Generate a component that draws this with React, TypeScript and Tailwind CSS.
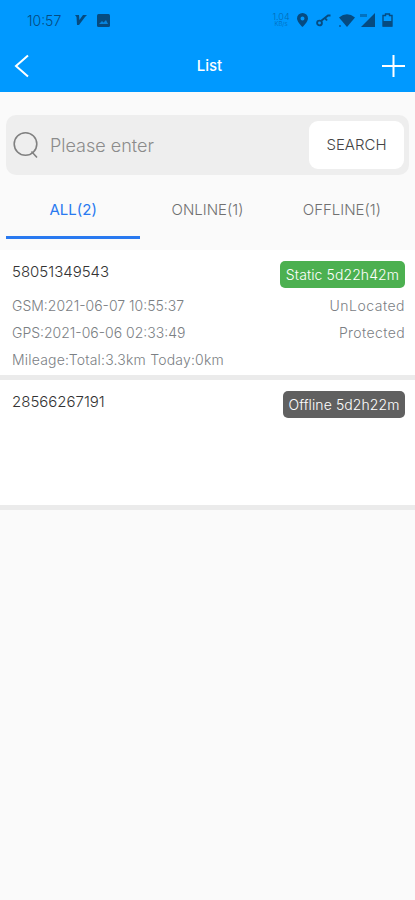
import type { ReactNode } from "react";

interface Device {
  id: string;
  status: ReactNode;
  lines: { text: string; className: string; side?: string; sideClassName?: string }[];
}

const devices: Device[] = [
  {
    id: "58051349543",
    status: (
      <span className="flex h-[27px] w-[125px] items-center justify-center rounded-[5px] bg-[#4cb050] text-[14px] tracking-[0.1px] text-white">
        Static 5d22h42m
      </span>
    ),
    lines: [
      {
        text: "GSM:2021-06-07 10:55:37",
        className: "tracking-[0px]",
        side: "UnLocated",
        sideClassName: "tracking-[0.5px]",
      },
      {
        text: "GPS:2021-06-06 02:33:49",
        className: "tracking-[0px]",
        side: "Protected",
        sideClassName: "tracking-[0.4px]",
      },
      { text: "Mileage:Total:3.3km Today:0km", className: "tracking-[0.2px]" },
    ],
  },
  {
    id: "28566267191",
    status: (
      <span className="flex h-[27px] w-[122px] items-center justify-center rounded-[5px] bg-[#606060] text-[14px] tracking-[0.1px] text-white">
        Offline 5d2h22m
      </span>
    ),
    lines: [],
  },
];

function StatusBar() {
  return (
    <div className="flex h-10 items-center justify-between pr-[22px] pl-[27px] text-[#064b80]">
      <div className="flex items-center">
        <span className="w-[48px] text-[14px] tracking-[0px]">10:57</span>
        <svg width="12" height="12" viewBox="0 0 12 12" fill="currentColor">
          <path d="M0 1h4l.4 5L8 1h4l-2 2L4 11H2L1.500 3z" />
        </svg>
        <svg className="ml-[10px]" width="13" height="13" viewBox="0 0 13 13">
          <rect width="13" height="13" rx="1.500" fill="currentColor" />
          <path d="M2 10l3-3 1.500 1.500L9 6l2 4z" fill="#0784dd" />
        </svg>
      </div>
      <div className="flex items-center">
        <div className="mr-[8px] flex w-[16px] flex-col items-center leading-none opacity-60">
          <span className="text-[9px] leading-[8px]">1.04</span>
          <span className="text-[6px] leading-[6px]">KB/s</span>
        </div>
        <svg width="11" height="14" viewBox="0 0 11 14" fill="currentColor">
          <path
            fillRule="evenodd"
            d="M5.500 0A5.500 5.500 0 0 0 0 5.500C0 9 5.500 14 5.500 14S11 9 11 5.500A5.500 5.500 0 0 0 5.500 0zm0 3.500a2 2 0 1 1 0 4 2 2 0 0 1 0-4z"
          />
        </svg>
        <svg className="ml-[8px]" width="15" height="14" viewBox="0 0 15 14" fill="none" stroke="currentColor">
          <circle cx="3.500" cy="10" r="2.400" strokeWidth="1.900" />
          <path d="M5 8l7-5.500h2.500M9 5l2 2.500" strokeWidth="2" />
        </svg>
        <svg className="ml-[8px]" width="16" height="13" viewBox="0 0 16 13" fill="currentColor">
          <path d="M0 3.500Q8-2.800 16 3.500L8 13z" />
          <path d="M0 11h2v2H0z" opacity=".6" />
        </svg>
        <svg className="ml-[5px]" width="15" height="14" viewBox="0 0 15 14" fill="currentColor">
          <path d="M15 0v14H1z" />
          <path d="M0 1h7v3H0z" opacity=".5" />
        </svg>
        <svg className="ml-[7px]" width="11" height="14" viewBox="0 0 11 14">
          <path d="M1 13V2.500h2.500V1h4v1.500H10V13z" fill="none" stroke="currentColor" strokeWidth="1.400" />
          <path d="M1 8h9v5.500H1z" fill="currentColor" />
        </svg>
      </div>
    </div>
  );
}

function Header() {
  return (
    <header className="h-[92px] bg-[#0099ff]">
      <StatusBar />
      <div className="grid h-[52px] grid-cols-3 items-center pr-[10px] pl-[14px] text-white">
        <svg width="16" height="24" viewBox="0 0 16 24" fill="none" stroke="currentColor" strokeWidth="2">
          <path d="M14 1.500L2 12l12 10.500" />
        </svg>
        <h1 className="text-center text-[15px] font-medium">List</h1>
        <svg className="justify-self-end" width="23" height="22" viewBox="0 0 23 22" stroke="currentColor" strokeWidth="2">
          <path d="M0 11h23M11.500 0v22" />
        </svg>
      </div>
    </header>
  );
}

function SearchBar() {
  return (
    <div className="mx-[6px] mt-[23px] flex h-[60px] items-center rounded-[10px] bg-[#eeeeee] pr-[5px] pl-[7px]">
      <svg width="26" height="28" viewBox="0 0 26 28" fill="none" stroke="#808080" strokeWidth="1.600">
        <circle cx="12.500" cy="13" r="11.300" />
        <path d="M18.500 20.500l5.500 6" />
      </svg>
      <span className="ml-[11px] flex-1 text-[18px] text-[#8b8b8b]">Please enter</span>
      <button className="h-[48px] w-[95px] rounded-[9px] bg-white text-[15px] text-[#444444]">SEARCH</button>
    </div>
  );
}

function Tabs() {
  return (
    <nav className="mx-[6px] mt-[10px] grid h-[54px] grid-cols-3 text-[15px] text-[#707070]">
      <button className="border-b-[3px] border-[#2979f0] text-[#2979f0] font-normal">ALL(2)</button>
      <button className="border-b-[3px] border-transparent">ONLINE(1)</button>
      <button className="border-b-[3px] border-transparent">OFFLINE(1)</button>
    </nav>
  );
}

function DeviceRow({ device }: { device: Device }) {
  return (
    <li className="h-[130px] border-b-[5px] border-[#ebebeb] bg-white pt-[11px] pr-[10px] pl-[12px]">
      <div className="flex h-[27px] justify-between">
        <span className="text-[15px] leading-[22px] text-[#333333]">{device.id}</span>
        {device.status}
      </div>
      <div className="mt-[4px] text-[14px] leading-[27px] text-[#7b8084]">
        {device.lines.map((line) => (
          <div key={line.text} className="flex justify-between">
            <span className={line.className}>{line.text}</span>
            <span className={line.sideClassName}>{line.side}</span>
          </div>
        ))}
      </div>
    </li>
  );
}

export default function App() {
  return (
    <div className="h-[900px] w-[415px] overflow-hidden bg-[#fafafa] font-[Inter,sans-serif] font-light whitespace-nowrap">
      <Header />
      <SearchBar />
      <Tabs />
      <ul className="mt-[11px]">
        {devices.map((device) => (
          <DeviceRow key={device.id} device={device} />
        ))}
      </ul>
    </div>
  );
}
